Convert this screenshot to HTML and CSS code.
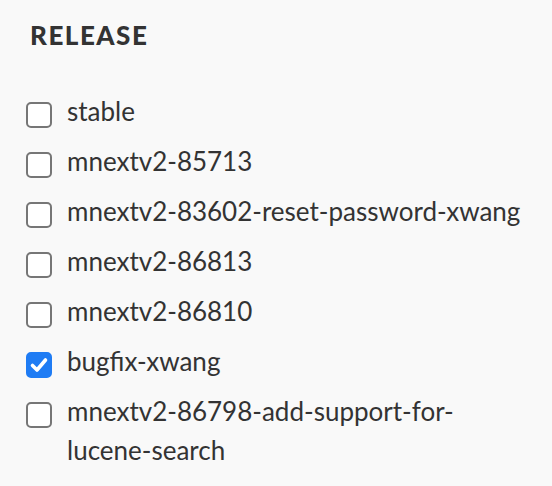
FILE: index.html
```html
<!DOCTYPE html>
<html>
<head>
<meta charset="utf-8">
<link rel="stylesheet" href="styles.css">
</head>
<body>
<div class="panel">
  <h2 class="title">RELEASE</h2>
  <ul class="options">
    <li class="option"><span class="box"></span><span class="label">stable</span></li>
    <li class="option"><span class="box"></span><span class="label">mnextv2-85713</span></li>
    <li class="option"><span class="box"></span><span class="label">mnextv2-83602-reset-password-xwang</span></li>
    <li class="option"><span class="box"></span><span class="label">mnextv2-86813</span></li>
    <li class="option"><span class="box"></span><span class="label">mnextv2-86810</span></li>
    <li class="option"><span class="box checked"><svg viewBox="0 0 26 26" width="26" height="26"><path d="M6.5 13.5 L11 18 L19.5 8" fill="none" stroke="#fff" stroke-width="3.6" stroke-linecap="round" stroke-linejoin="round"/></svg></span><span class="label">bugfix-xwang</span></li>
    <li class="option"><span class="box"></span><span class="label">mnextv2-86798-add-support-for-lucene-search</span></li>
  </ul>
</div>
</body>
</html>
```
FILE: styles.css
```css
html, body {
  margin: 0;
  background: #f9f9f9;
}
.panel {
  box-sizing: border-box;
  width: 524px;
  padding: 20px 0 0 26px;
  font-family: Lato, "Open Sans", sans-serif;
  color: #333333;
}
.title {
  margin: 0;
  font-size: 26px;
  line-height: 30px;
  font-weight: 900;
  letter-spacing: 1.5px;
  padding-left: 4px;
}
.options {
  list-style: none;
  margin: 42px 0 0 0;
  padding: 0;
}
.option {
  display: flex;
  align-items: flex-start;
  gap: 15px;
  font-size: 26px;
  line-height: 39px;
  margin-bottom: 11px;
}
.box {
  flex: none;
  box-sizing: border-box;
  width: 26px;
  height: 26px;
  margin-top: 10px;
  border: 2px solid #767676;
  border-radius: 5px;
  background: #ffffff;
  position: relative;
}
.box.checked {
  background: #1f7cf4;
  border-color: #1f7cf4;
}
.box.checked svg {
  position: absolute;
  left: -2px;
  top: -2px;
}
.label {
  min-width: 0;
}
```
